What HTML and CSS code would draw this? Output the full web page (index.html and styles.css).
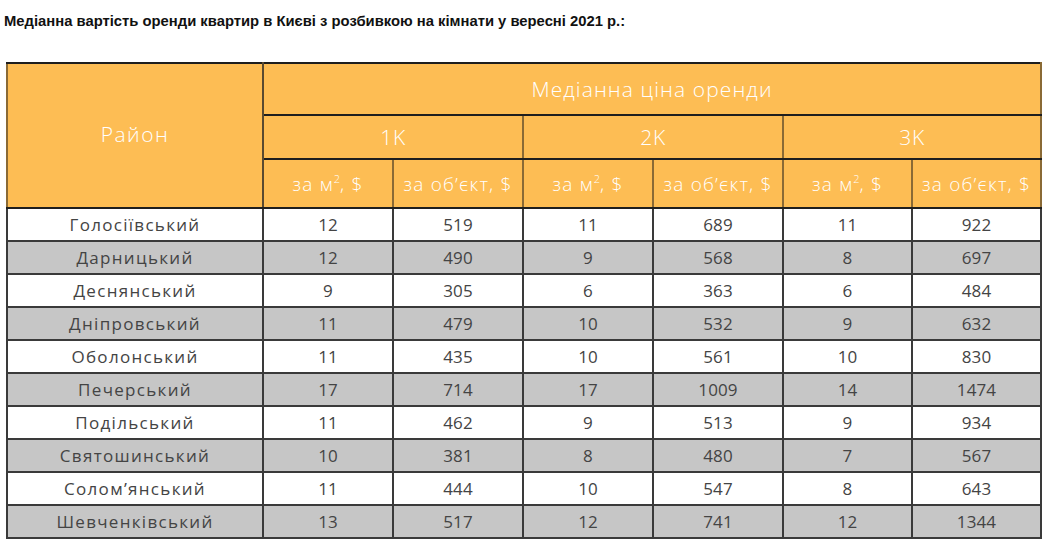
FILE: index.html
```html
<!DOCTYPE html>
<html lang="uk">
<head>
<meta charset="utf-8">
<link rel="stylesheet" href="styles.css">
</head>
<body>
<h1 class="title">Медіанна вартість оренди квартир в Києві з розбивкою на кімнати у вересні 2021 р.:</h1>
<table class="rent">
  <colgroup>
    <col class="c-district">
    <col class="c-num"><col class="c-num"><col class="c-num"><col class="c-num"><col class="c-num2"><col class="c-num2">
  </colgroup>
  <thead>
    <tr class="h1">
      <th rowspan="3" class="district-h">Район</th>
      <th colspan="6">Медіанна ціна оренди</th>
    </tr>
    <tr class="h2">
      <th colspan="2">1K</th>
      <th colspan="2">2K</th>
      <th colspan="2">3K</th>
    </tr>
    <tr class="h3">
      <th>за м<sup>2</sup>, $</th><th>за об’єкт, $</th>
      <th>за м<sup>2</sup>, $</th><th>за об’єкт, $</th>
      <th>за м<sup>2</sup>, $</th><th>за об’єкт, $</th>
    </tr>
  </thead>
  <tbody>
    <tr><td class="name">Голосіївський</td><td>12</td><td>519</td><td>11</td><td>689</td><td>11</td><td>922</td></tr>
    <tr class="alt"><td class="name">Дарницький</td><td>12</td><td>490</td><td>9</td><td>568</td><td>8</td><td>697</td></tr>
    <tr><td class="name">Деснянський</td><td>9</td><td>305</td><td>6</td><td>363</td><td>6</td><td>484</td></tr>
    <tr class="alt"><td class="name">Дніпровський</td><td>11</td><td>479</td><td>10</td><td>532</td><td>9</td><td>632</td></tr>
    <tr><td class="name">Оболонський</td><td>11</td><td>435</td><td>10</td><td>561</td><td>10</td><td>830</td></tr>
    <tr class="alt"><td class="name">Печерський</td><td>17</td><td>714</td><td>17</td><td>1009</td><td>14</td><td>1474</td></tr>
    <tr><td class="name">Подільський</td><td>11</td><td>462</td><td>9</td><td>513</td><td>9</td><td>934</td></tr>
    <tr class="alt"><td class="name">Святошинський</td><td>10</td><td>381</td><td>8</td><td>480</td><td>7</td><td>567</td></tr>
    <tr><td class="name">Солом’янський</td><td>11</td><td>444</td><td>10</td><td>547</td><td>8</td><td>643</td></tr>
    <tr class="alt"><td class="name">Шевченківський</td><td>13</td><td>517</td><td>12</td><td>741</td><td>12</td><td>1344</td></tr>
  </tbody>
</table>
</body>
</html>
```
FILE: styles.css
```css
html, body {
  margin: 0;
  padding: 0;
  background: #ffffff;
}
body {
  padding: 0 3px 0 6px;
}
.title {
  margin: 0;
  padding: 13px 0 0 0;
  margin-left: -2px;
  font-family: "Liberation Sans", Arial, sans-serif;
  font-weight: bold;
  font-size: 14.8px;
  line-height: 17px;
  color: #111;
}
.rent {
  margin-top: 32px;
  width: 1034px;
  border-collapse: collapse;
  table-layout: fixed;
  font-family: "Open Sans", "Noto Sans", sans-serif;
  font-weight: 400;
  border: 2px solid #2a2a2a;
}
.c-district { width: 256px; }
.c-num { width: 130px; }
.c-num2 { width: 129px; }
.rent th {
  background: #fdbd54;
  color: #ffffff;
  font-weight: 300;
  border: 2px solid #1e1e1e;
  border-left-color: #8a6a35;
  border-right-color: #8a6a35;
  padding: 0;
  text-align: center;
}
.rent th.district-h {
  border-right: 2px solid #5a4a30;
  font-size: 21px;
  padding-bottom: 4px;
  letter-spacing: 1.5px;
}
.h1 th { height: 50px; font-size: 21px; letter-spacing: 1.1px; }
.h2 th { height: 42px; font-size: 21px; letter-spacing: 0.6px; }
.h3 th { height: 47px; font-size: 19px; letter-spacing: 1.2px; white-space: nowrap; }
.h3 th sup {
  font-size: 11px;
  line-height: 0;
  vertical-align: 8px;
  letter-spacing: 0;
}
.rent td {
  height: 31px;
  padding: 0;
  text-align: center;
  font-size: 17px;
  letter-spacing: 0.1px;
  color: #444444;
  border: 2px solid #3a3a3a;
  background: #ffffff;
}
.rent td.name {
  letter-spacing: 1.3px;
}
.rent tr.alt td {
  background: #c6c6c6;
}
```
